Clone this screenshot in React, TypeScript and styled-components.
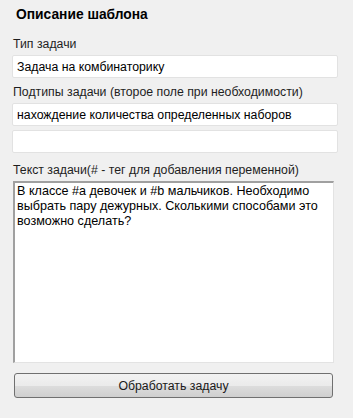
import React, { useState } from 'react';
import styled, { createGlobalStyle } from 'styled-components';

const GlobalStyle = createGlobalStyle`
    body {
        margin: 0;
        background: #f0f0f0;
        font-family: "Liberation Sans", Arial, sans-serif;
        font-size: 12.3px;
        color: #1a1a1a;
    }
`;

const Panel = styled.div`
    display: flex;
    flex-direction: column;
    width: 353px;
    height: 418px;
    box-sizing: border-box;
    padding: 7px 15px 0 12px;
    background: #f0f0f0;
`;

const Title = styled.div`
    font-weight: bold;
    font-size: 13.8px;
    line-height: 16px;
    color: #000;
    padding-left: 4px;
    margin-bottom: 14px;
`;

const Label = styled.label<{ $gap?: number }>`
    display: block;
    line-height: 15px;
    padding-left: 1px;
    margin-top: ${(p) => p.$gap ?? 0}px;
    margin-bottom: 3px;
    color: #1e1e1e;
`;

const Field = styled.input`
    box-sizing: border-box;
    width: 326px;
    height: 23px;
    margin: 0;
    padding: 0 4px;
    border: 1px solid #e2e2e2;
    border-radius: 2px;
    background: #fff;
    font: inherit;
    color: #000;
    outline: none;
`;

const Stack = styled.div`
    display: flex;
    flex-direction: column;
    gap: 4px;
`;

const TextArea = styled.textarea`
    box-sizing: border-box;
    width: 321px;
    height: 182px;
    margin-left: 1px;
    padding: 1px 2px;
    border-style: solid;
    border-width: 2px 1px 1px 2px;
    border-color: #a0a0a0 #e3e3e3 #e3e3e3 #a0a0a0;
    background: #fff;
    font: inherit;
    font-size: 12.6px;
    line-height: 15px;
    color: #000;
    resize: none;
    outline: none;
`;

const Action = styled.button`
    box-sizing: border-box;
    width: 319px;
    height: 25px;
    margin: 10px 0 0 2px;
    border: 1px solid #707070;
    border-radius: 3px;
    background: linear-gradient(#f2f2f2 0%, #ebebeb 50%, #dddddd 51%, #cfcfcf 100%);
    font: inherit;
    color: #1a1a1a;
    cursor: pointer;
`;

const TemplateForm: React.FC = () => {
    const [type, setType] = useState('Задача на комбинаторику');
    const [sub1, setSub1] = useState('нахождение количества определенных наборов');
    const [sub2, setSub2] = useState('');
    const [text, setText] = useState(
        'В классе #a девочек и #b мальчиков. Необходимо выбрать пару дежурных. Сколькими способами это возможно сделать?'
    );

    return (
        <Panel>
            <Title>Описание шаблона</Title>
            <Label>Тип задачи</Label>
            <Field value={type} onChange={(e) => setType(e.target.value)} />
            <Label $gap={7}>Подтипы задачи (второе поле при необходимости)</Label>
            <Stack>
                <Field value={sub1} onChange={(e) => setSub1(e.target.value)} />
                <Field value={sub2} onChange={(e) => setSub2(e.target.value)} />
            </Stack>
            <Label $gap={10}>Текст задачи(# - тег для добавления переменной)</Label>
            <TextArea value={text} onChange={(e) => setText(e.target.value)} />
            <Action>Обработать задачу</Action>
        </Panel>
    );
};

export default function App() {
    return (
        <>
            <GlobalStyle />
            <TemplateForm />
        </>
    );
}
